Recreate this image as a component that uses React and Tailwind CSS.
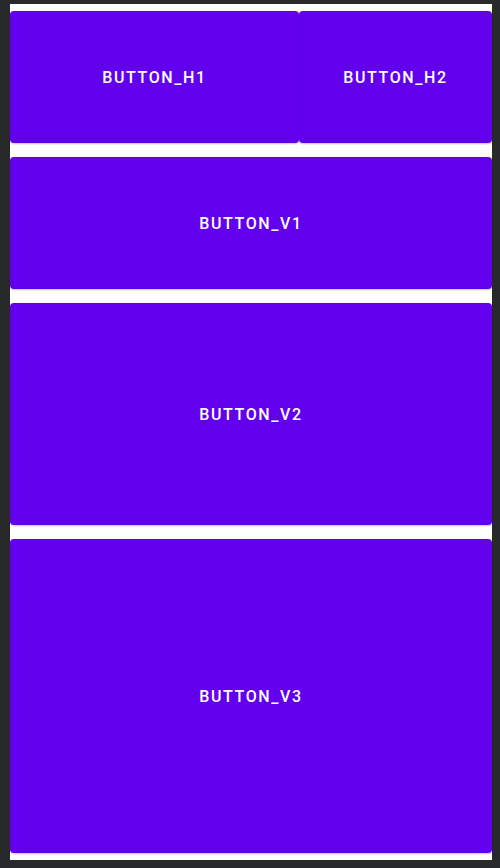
const Btn = ({ label, className = "" }) => (
    <div className={`flex items-center justify-center rounded-[4px] bg-[#6200ee] pt-[2px] shadow-[0_1px_2px_rgba(0,0,0,0.25)] ${className}`}>
        <span className="text-[16px] font-medium tracking-[0.1em] text-white">{label}</span>
    </div>
);

export default function App() {
    return (
        <div
            className="h-[868px] w-[500px] bg-[#27292a] pl-[10px] pr-[8px] pt-[4px] pb-[8px]"
            style={{ fontFamily: "Roboto, 'Liberation Sans', sans-serif" }}
        >
            <div className="flex h-full flex-col bg-white">
                <div className="flex h-[146px] py-[7px]">
                    <Btn label="BUTTON_H1" className="h-full w-[289px]" />
                    <Btn label="BUTTON_H2" className="h-full flex-1" />
                </div>
                <div className="flex h-[146px] py-[7px]">
                    <Btn label="BUTTON_V1" className="h-full flex-1" />
                </div>
                <div className="flex h-[236px] py-[7px]">
                    <Btn label="BUTTON_V2" className="h-full flex-1" />
                </div>
                <div className="flex h-[328px] py-[7px]">
                    <Btn label="BUTTON_V3" className="h-full flex-1" />
                </div>
            </div>
        </div>
    );
}
